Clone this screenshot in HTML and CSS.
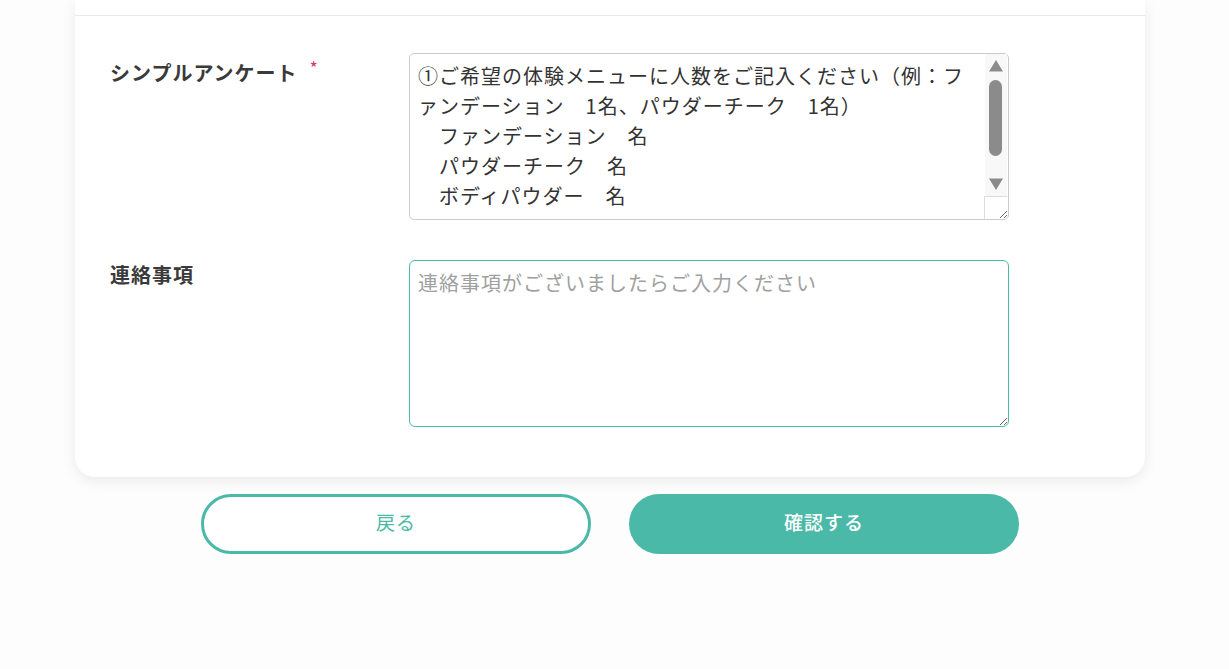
FILE: index.html
```html
<!DOCTYPE html>
<html lang="ja">
<head>
  <meta charset="UTF-8">
  <title>予約フォーム</title>
  <link rel="stylesheet" href="styles.css">
</head>
<body>
  <div class="card">
    <div class="card-head"></div>

    <!-- survey row -->
    <div class="form-row">
      <label class="form-label form-label-required" for="survey">シンプルアンケート<span class="required">*</span></label>
      <div class="field-wrap">
        <textarea id="survey" class="field field-scroll">①ご希望の体験メニューに人数をご記入ください（例：ファンデーション　1名、パウダーチーク　1名）
　ファンデーション　名
　パウダーチーク　名
　ボディパウダー　名

</textarea>
        <!-- scrollbar drawn over the textarea -->
        <div class="scrollbar" aria-hidden="true">
          <svg class="scroll-btn" viewBox="0 0 22 22"><path d="M4 17.5 L11 6 L18 17.5 Z"/></svg>
          <div class="scroll-track"><div class="scroll-thumb"></div></div>
          <svg class="scroll-btn" viewBox="0 0 22 22"><path d="M4 4.5 L11 16 L18 4.5 Z"/></svg>
        </div>
        <div class="scroll-corner" aria-hidden="true"></div>
      </div>
    </div>

    <!-- notes row -->
    <div class="form-row">
      <label class="form-label" for="notes">連絡事項</label>
      <div class="field-wrap">
        <textarea id="notes" class="field field-active" placeholder="連絡事項がございましたらご入力ください"></textarea>
      </div>
    </div>
  </div>

  <div class="actions">
    <button type="button" class="btn btn-back">戻る</button>
    <button type="submit" class="btn btn-confirm">確認する</button>
  </div>
</body>
</html>
```

FILE: styles.css
```css
:root {
  --primary: #4bb9a7;
  --text: #333333;
  --border: #cccccc;
  --background: #fdfdfd;
  --surface: #ffffff;
  --scroll: #8b8b8b;
}

body {
  margin: 0;
  background: var(--background);
  color: var(--text);
  font-family: "Noto Sans CJK JP", "Noto Sans", sans-serif;
  letter-spacing: 1px;
}

.card {
  width: 1070px;
  margin-left: 75px;
  background: var(--surface);
  border-radius: 0 0 20px 20px;
  box-shadow: 0 4px 14px rgba(0, 0, 0, 0.08);
  padding-bottom: 50px;
}

.card-head {
  height: 15px;
  border-bottom: 1px solid #e8e8e8;
  margin-bottom: 37px;
}

.form-row {
  display: flex;
  margin-bottom: 40px;
}

.form-row:last-child {
  margin-bottom: 0;
}

.form-label {
  display: flex;
  align-items: flex-start;
  box-sizing: border-box;
  width: 334px;
  padding-left: 35px;
  font-size: 20px;
  font-weight: 700;
  line-height: 30px;
  color: #3a3a3a;
}

.form-label-required {
  padding-top: 5px;
}

.required {
  color: #e0356a;
  font-size: 18px;
  font-weight: 400;
  line-height: 18px;
  margin: 0 0 0 12px;
}

.field-wrap {
  position: relative;
  width: 600px;
  height: 167px;
}

.field {
  display: block;
  box-sizing: border-box;
  width: 600px;
  height: 167px;
  margin: 0;
  padding: 7px 8px;
  border: 1px solid var(--border);
  border-radius: 5px;
  font-family: "Noto Sans CJK JP", "Noto Sans", sans-serif;
  font-size: 20px;
  line-height: 30px;
  letter-spacing: 1px;
  color: var(--text);
  background: var(--surface);
  resize: vertical;
}

.field-scroll {
  padding-right: 30px;
  overflow: hidden;
}

.field-active {
  border-color: var(--primary);
  border-radius: 6px;
  outline: none;
}

.field::placeholder {
  color: #a0a0a0;
}

/* fake classic scrollbar */
.scrollbar {
  position: absolute;
  top: 1px;
  left: 576px;
  width: 22px;
  height: 142px;
  display: flex;
  flex-direction: column;
  background: #f8f8f8;
  pointer-events: none;
}

.scroll-btn {
  display: block;
  width: 22px;
  height: 22px;
  fill: var(--scroll);
}

.scroll-track {
  flex: 1;
  padding: 4px 0 0 4px;
}

.scroll-thumb {
  width: 13px;
  height: 76px;
  border-radius: 7px;
  background: var(--scroll);
}

.scroll-corner {
  position: absolute;
  top: 143px;
  left: 575px;
  width: 23px;
  height: 23px;
  box-sizing: border-box;
  border-top: 1px solid #dddddd;
  border-left: 1px solid #dddddd;
  pointer-events: none;
}

.actions {
  display: flex;
  justify-content: center;
  gap: 38px;
  padding-top: 17px;
  width: 1220px;
}

.btn {
  width: 390px;
  height: 60px;
  padding: 0 0 5px;
  border-radius: 30px;
  font-family: "Noto Sans CJK JP", "Noto Sans", sans-serif;
  font-size: 19px;
  letter-spacing: 1px;
  cursor: pointer;
}

.btn-back {
  background: var(--surface);
  border: 3px solid var(--primary);
  color: var(--primary);
}

.btn-confirm {
  background: var(--primary);
  border: none;
  color: #ffffff;
  font-weight: 500;
}
```
